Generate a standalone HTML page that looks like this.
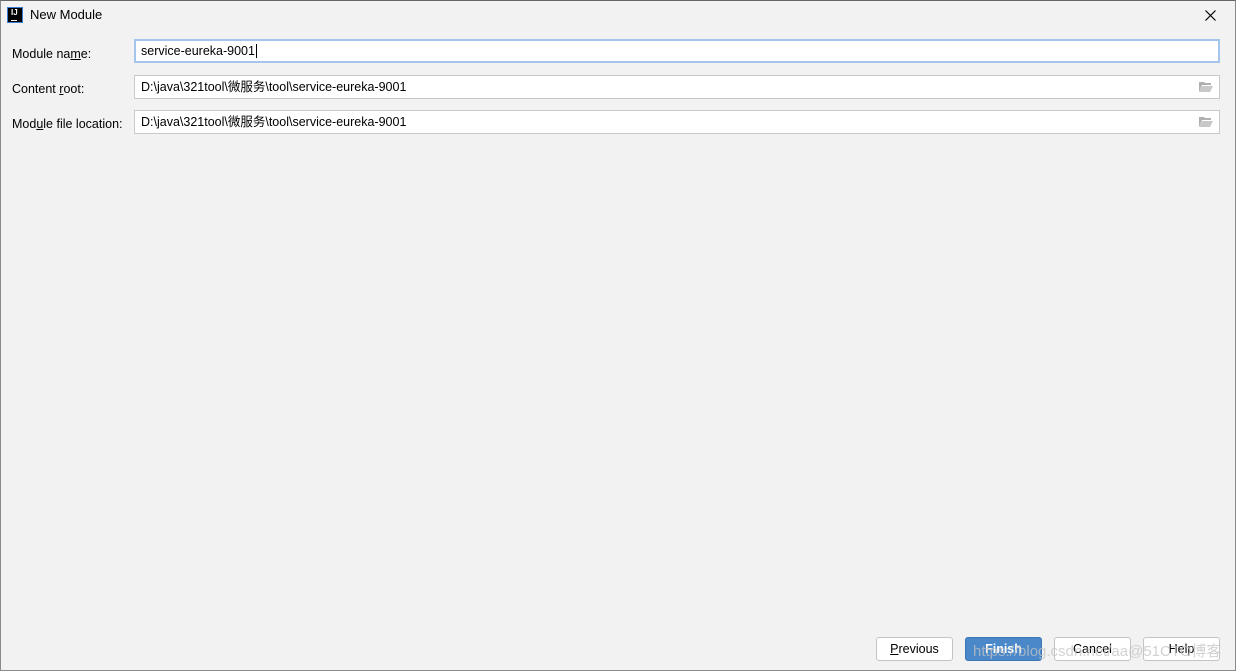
<!DOCTYPE html>
<html><head><meta charset="utf-8"><style>
*{box-sizing:border-box;margin:0;padding:0}
body{width:1236px;height:671px;background:#f2f2f2;font-family:"Segoe UI","Liberation Sans","Noto Sans CJK SC",sans-serif;font-size:12.5px;color:#000;position:relative;overflow:hidden}
.frame{position:absolute;left:0;top:0;width:1236px;height:671px;border:1px solid #8a8a8a;border-top-color:#666}
.abs{position:absolute}
.logo{left:7px;top:7px;width:16px;height:16px;background:#000;border:1px solid #3a7bd5;color:#fff;font-size:8px;font-weight:bold;line-height:9px;padding-left:3px}
.title{left:30px;top:7px;font-size:13px}
.lbl{left:12px}
.field{left:134px;width:1086px;height:24px;background:#fff;border:1px solid #c9c9c9;padding-left:6px;line-height:22px}
.f1{top:39px;border:2px solid #a4c6ec;line-height:20px;padding-left:5px}
.folder{right:6px;top:6px;width:14px;height:10px}
.btn{top:637px;height:24px;border:1px solid #c4c4c4;border-radius:3px;background:#fff;text-align:center;line-height:22px}
</style></head><body>
<div class="frame"></div>
<div class="abs logo">IJ<div style="width:6px;height:1px;background:#fff;margin-top:3px"></div></div>
<div class="abs title">New Module</div>
<svg class="abs" style="left:1205px;top:10px" width="11" height="11" viewBox="0 0 11 11"><path d="M0.5 0.5L10.5 10.5M10.5 0.5L0.5 10.5" stroke="#000" stroke-width="1.2"/></svg>
<div class="abs lbl" style="top:47px">Module na<u>m</u>e:</div>
<div class="abs lbl" style="top:82px">Content <u>r</u>oot:</div>
<div class="abs lbl" style="top:117px">Mod<u>u</u>le file location:</div>
<div class="abs field f1">service-eureka-9001<span style="border-left:1px solid #000;margin-left:1px"></span></div>
<div class="abs field" style="top:75px">D:\java\321tool\微服务\tool\service-eureka-9001
<svg class="abs folder" viewBox="0 0 14 10"><path d="M0 0h5l1 1h6v2H3L0 10z" fill="#b0b0b0"/><path d="M3 4h11l-3 6H0z" fill="#c8c8c8"/></svg></div>
<div class="abs field" style="top:110px">D:\java\321tool\微服务\tool\service-eureka-9001
<svg class="abs folder" viewBox="0 0 14 10"><path d="M0 0h5l1 1h6v2H3L0 10z" fill="#b0b0b0"/><path d="M3 4h11l-3 6H0z" fill="#c8c8c8"/></svg></div>
<div class="abs btn" style="left:876px;width:77px"><u>P</u>revious</div>
<div class="abs btn" style="left:965px;width:77px;background:#4a88c9;border-color:#3d76b3;color:#fff;font-weight:bold">Finish</div>
<div class="abs btn" style="left:1054px;width:77px">Cancel</div>
<div class="abs btn" style="left:1143px;width:77px">Help</div>
<div class="abs" style="left:973px;top:640px;font-size:15px;color:rgba(195,195,195,0.75);white-space:nowrap;font-family:'Liberation Sans','Noto Sans CJK SC',sans-serif">https://blog.csdn.net/aa@51CTO博客</div>
</body></html>
